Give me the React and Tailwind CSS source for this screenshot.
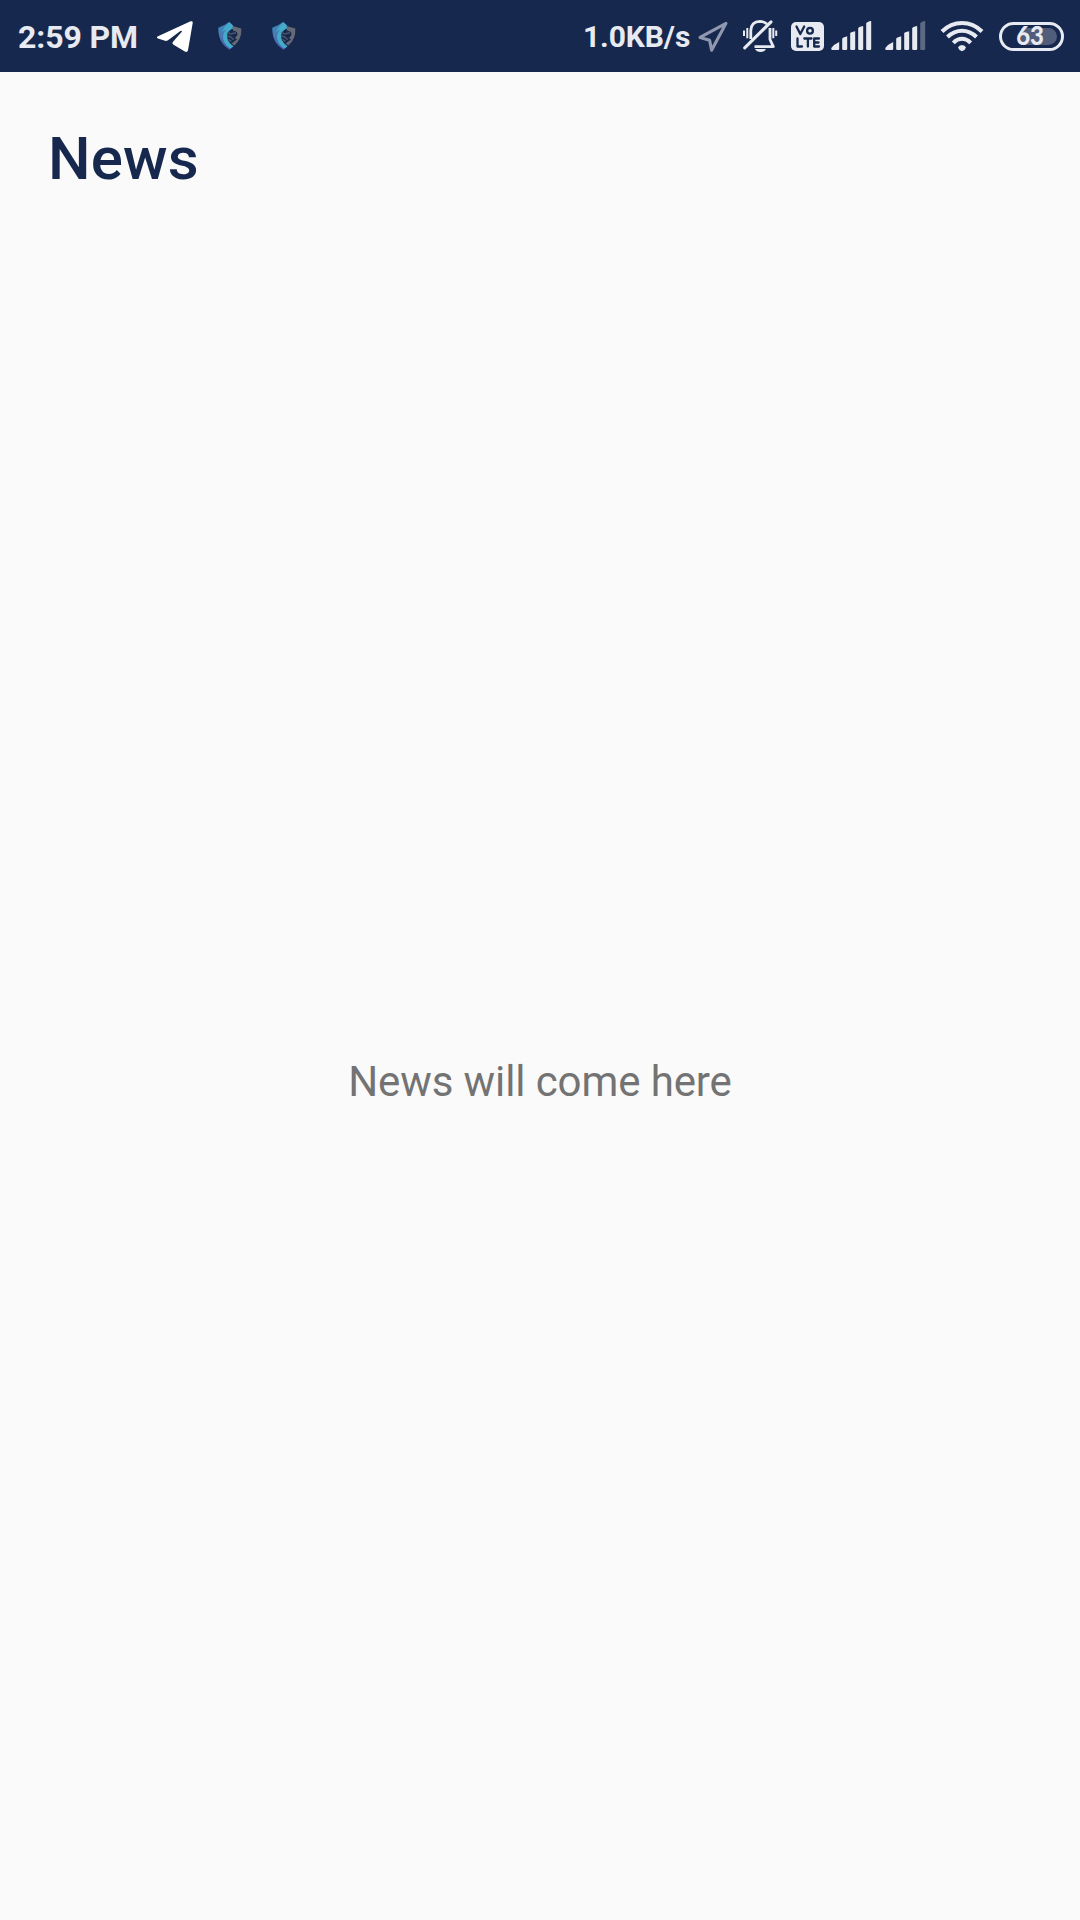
const INK = '#e8eaf1';

function TelegramIcon() {
  return (
    <svg className="ml-[20px] h-[34px] w-[38px] shrink-0" viewBox="156 19 38 34">
      <path d="M158 36.3L190.6 21.3Q193 20.6 192.7 23L188 50.2Q187.3 52.8 184.8 51.6L173.2 44.4Q171.8 43.2 173 41.8L181.8 31.8Q182.2 30.3 180.4 31L168 40.2Q166.6 41.2 165 40.8L158 38.6Q155.8 37.5 158 36.3Z" fill="#fff" />
    </svg>
  );
}

function ShieldIcon({ id }) {
  return (
    <svg className="h-[28px] w-[24px] shrink-0" viewBox="0 0 24 28">
      <defs>
        <linearGradient id={id} x1="0" y1="0" x2="0.6" y2="1">
          <stop offset="0" stopColor="#3b93bd" />
          <stop offset=".5" stopColor="#4a74b4" />
          <stop offset="1" stopColor="#4a55a4" />
        </linearGradient>
      </defs>
      <path d="M11 0L14.5 3L16 6Q9.5 8 9 13.5Q9 20 15.5 24.5L11.5 27.8Q0 21 .3 5.8Q6 4 11 0Z" fill={`url(#${id})`} />
      <path d="M11.5 0.3L14.5 3L16 6Q9.5 8 9 13.5Q8.8 20 15.5 24.3L12 26.8Q4.5 21 5 14Q5.5 10.5 8 7.5Q6 8 4 10Q6 4.5 11.5 .3Z" fill="#43abc9" />
      <path d="M14.5 4L23.3 6.5Q24 17 16.3 23.5L13.5 21.5L19 17.5L17 16L19.5 13L19 10L15 8.5Z" fill="#666a74" />
      <path d="M9.5 10l3 2 5.5-1.2M9.2 13.8l3.8 1.4 2.8 2.6M10.5 17.4l2.8 2" fill="none" stroke="#4c5669" strokeWidth="1.5" />
    </svg>
  );
}

function LocationIcon() {
  return (
    <svg className="ml-[6px] h-[34px] w-[32px] shrink-0" viewBox="697 19 32 34">
      <path d="M726 23.3L700 37.4L709.6 40.3L711.6 50.2Z" fill="none" stroke="#8f98ae" strokeWidth="3.1" strokeLinejoin="round" />
    </svg>
  );
}

function MutedBellIcon() {
  return (
    <svg className="ml-[13px] h-[34px] w-[36px] shrink-0" viewBox="742 19 36 34" fill="none" stroke={INK} strokeWidth="2.8">
      <path d="M750.8 39V30.5Q751.2 21.6 760 21.4Q764 21.4 767 24" />
      <path d="M770 28V39.5L773.3 46.6H754.5" strokeLinejoin="round" />
      <path d="M744.7 47.8L771 21.8" strokeWidth="3.1" strokeLinecap="round" />
      <path d="M755 49H766Q764.5 52 760.5 52Q756.5 52 755 49Z" fill={INK} stroke="none" />
      <path d="M744 30.5V36M747.3 28V38.2M773.3 28V38.2M776.2 30.5V36" strokeWidth="2" />
    </svg>
  );
}

function VolteIcon() {
  return (
    <svg className="ml-[13px] h-[34px] w-[33px] shrink-0" viewBox="791 19 33 34">
      <rect x="791" y="22" width="33" height="29" rx="5" fill={INK} />
      <g fill="none" stroke="#16284d" strokeWidth="2.3" strokeLinecap="round" strokeLinejoin="round">
        <path d="M796.5 26.5L800.3 34L804.2 26.5" />
        <circle cx="810" cy="30.8" r="2.9" />
        <path d="M797.5 38.5V46.5H802M804.3 38.5H811.5M807.9 38.5V46.5M819 38.5H814.2V46.5H819M814.2 42.5H818.5" />
      </g>
    </svg>
  );
}

function SignalIcon({ className, lastFill }) {
  return (
    <svg className={className} viewBox="0 0 41 34" fill={INK}>
      <path d="M8.2 23V30Q8.2 31 7 31H1.2Q-.2 31 .5 28.8Q3 25.3 8.2 23Z" />
      <path d="M11.2 19.7Q11.2 18.7 16.2 17.3V30Q16.2 31 15 31H12.4Q11.2 31 11.2 30Z" />
      <path d="M19.2 14.3Q19.2 13 24.2 12.2V30Q24.2 31 23 31H20.4Q19.2 31 19.2 30Z" />
      <path d="M27.2 9.3Q27.2 8 32.2 7V30Q32.2 31 31 31H28.4Q27.2 31 27.2 30Z" />
      <path d="M35.2 4.5Q36 2.5 40.2 2V30Q40.2 31 39 31H36.4Q35.2 31 35.2 30Z" fill={lastFill} />
    </svg>
  );
}

function WifiIcon() {
  return (
    <svg className="ml-[14px] h-[34px] w-[44px] shrink-0" viewBox="940 19 44 34" fill="none" stroke={INK} strokeWidth="4">
      <path d="M942 31.5Q950.5 23 962 23Q973.5 23 982 31.5" />
      <path d="M947.5 37Q954 30.8 962 30.8Q970 30.8 976.5 37" />
      <path d="M953.3 42.8Q957.3 38.8 962 38.8Q966.7 38.8 970.7 42.8" />
      <path d="M958 47.6Q959 45 962 45Q965 45 966 47.6Q965 50.8 962 51.3Q959 50.8 958 47.6Z" fill={INK} stroke="none" />
    </svg>
  );
}

function Battery({ level }) {
  return (
    <div className="relative ml-[15px] flex h-[29px] w-[65px] shrink-0 items-center justify-center rounded-full border-[3px] border-[#e8eaf1]">
      <div className="absolute right-[4px] top-[3px] h-[17px] w-[36px] rounded-r-full bg-[#505d7b]" />
      <span className="relative -left-[1px] -top-px scale-x-[0.92] font-['Lato',sans-serif] text-[26px] font-black leading-none text-[#e8eaf1]">
        {level}
      </span>
    </div>
  );
}

export default function App() {
  return (
    <div className="flex h-[1920px] w-[1080px] flex-col overflow-hidden bg-[#fafafa] font-[Roboto,sans-serif]">
      <header className="flex h-[72px] shrink-0 items-center bg-[#16284d] text-[#e8eaf1]">
        <span className="ml-[18px] mt-[2px] w-[118px] whitespace-nowrap text-[32px] font-bold leading-[38px] tracking-[-0.1px]">2:59 PM</span>
        <TelegramIcon />
        <div className="ml-[24px] flex gap-[30px]">
          <ShieldIcon id="shield-a" />
          <ShieldIcon id="shield-b" />
        </div>
        <div className="ml-auto mr-[16px] flex items-center">
          <span className="mt-[2px] w-[108px] whitespace-nowrap text-[30px] font-bold leading-[38px] tracking-[-0.1px]">1.0KB/s</span>
          <LocationIcon />
          <MutedBellIcon />
          <VolteIcon />
          <SignalIcon className="ml-[7px] h-[34px] w-[41px] shrink-0" lastFill={INK} />
          <SignalIcon className="ml-[13px] h-[34px] w-[41px] shrink-0" lastFill="#5c6884" />
          <WifiIcon />
          <Battery level="63" />
        </div>
      </header>
      <h1 className="ml-[48px] mt-[51px] h-[72px] text-[60px] font-medium leading-[72px] tracking-[0.2px] text-[#16284d]">News</h1>
      <main className="flex grow items-center justify-center pt-[49px]">
        <p className="text-[42px] leading-[50px] tracking-[-0.1px] text-[#737373]">News will come here</p>
      </main>
    </div>
  );
}
